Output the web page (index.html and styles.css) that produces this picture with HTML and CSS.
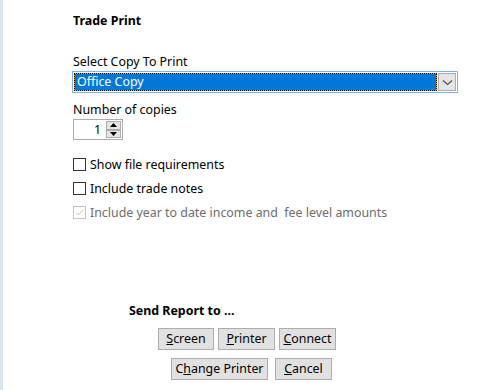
FILE: index.html
```html
<!DOCTYPE html>
<html>
<head>
<meta charset="utf-8">
<link rel="stylesheet" href="styles.css">
</head>
<body>
<div class="page">
  <div class="title">Trade Print</div>
  <div class="label label-select">Select Copy To Print</div>
  <div class="combo">
    <div class="combo-field"><div class="combo-focus">Office Copy</div></div>
    <div class="combo-btn">
      <svg width="11" height="7" viewBox="0 0 11 7"><path d="M1 1.5 L5.5 5.5 L10 1.5" fill="none" stroke="#555" stroke-width="1.2"/></svg>
    </div>
  </div>
  <div class="label label-num">Number of copies</div>
  <div class="spinner">
    <div class="spin-value">1</div>
    <div class="spin-btns">
      <div class="spin-btn"><svg width="7" height="4" viewBox="0 0 7 4"><path d="M0 4 L3.5 0 L7 4 Z" fill="#000"/></svg></div>
      <div class="spin-btn"><svg width="7" height="4" viewBox="0 0 7 4"><path d="M0 0 L3.5 4 L7 0 Z" fill="#000"/></svg></div>
    </div>
  </div>
  <div class="checks">
    <div class="check-row"><span class="box"></span><span>Show file requirements</span></div>
    <div class="check-row"><span class="box"></span><span>Include trade notes</span></div>
    <div class="check-row disabled"><span class="box"><svg width="11" height="11" viewBox="0 0 11 11"><path d="M2 5.5 L4.5 8 L9.5 2.5" fill="none" stroke="#c2c2c2" stroke-width="1"/></svg></span><span>Include year to date income and&nbsp; fee level amounts</span></div>
  </div>
  <div class="send">
    <div class="send-title">Send Report to ...</div>
    <div class="btn-row row1">
      <div class="btn w56"><u>S</u>creen</div>
      <div class="btn w57"><u>P</u>rinter</div>
      <div class="btn w57"><u>C</u>onnect</div>
    </div>
    <div class="btn-row row2">
      <div class="btn w97">C<u>h</u>ange Printer</div>
      <div class="btn w57"><u>C</u>ancel</div>
    </div>
  </div>
</div>
</body>
</html>
```
FILE: styles.css
```css
html, body {
  margin: 0;
  padding: 0;
  background: #fff;
}
body {
  font-family: "Noto Sans", "Open Sans", sans-serif;
  font-size: 12.4px;
  color: #000;
}
.page {
  border-left: 3px solid #d9e5f3;
  height: 390px;
  box-sizing: border-box;
  padding-left: 70px;
  padding-top: 13px;
}
.title {
  font-weight: bold;
  line-height: 16px;
  height: 16px;
}
.label {
  line-height: 16px;
  height: 16px;
}
.label-select {
  margin-top: 25px;
}
.combo {
  margin-top: 1px;
  margin-left: -1px;
  width: 386px;
  height: 22px;
  box-sizing: border-box;
  border: 1px solid #7eb4ea;
  padding: 1px;
  display: flex;
  gap: 1px;
}
.combo-field {
  flex: 1;
  background: #f0a030;
}
.combo-focus {
  height: 100%;
  box-sizing: border-box;
  border: 1px dotted #000;
  background: #0078d7;
  background-clip: padding-box;
  color: #fff;
  line-height: 16px;
  padding-left: 2px;
}
.combo-btn {
  width: 18px;
  box-sizing: border-box;
  border: 1px solid #adadad;
  background: #e5e5e5;
  display: flex;
  align-items: center;
  justify-content: center;
}
.label-num {
  margin-top: 9px;
}
.spinner {
  margin-top: 1px;
  width: 50px;
  height: 21px;
  box-sizing: border-box;
  border: 1px solid #acacac;
  display: flex;
  align-items: center;
}
.spin-value {
  flex: 1;
  text-align: right;
  padding-right: 5px;
  line-height: 16px;
}
.spin-btns {
  width: 15px;
  height: 17px;
  display: flex;
  flex-direction: column;
  margin-right: 1px;
}
.spin-btn {
  flex: 1;
  box-sizing: border-box;
  border: 1px solid #adadad;
  background: #e5e5e5;
  display: flex;
  align-items: center;
  justify-content: center;
}
.checks {
  margin-top: 12px;
}
.check-row {
  height: 24px;
  display: flex;
  align-items: center;
  gap: 4px;
}
.box {
  width: 13px;
  height: 13px;
  box-sizing: border-box;
  border: 1px solid #333;
  background: #fff;
  display: flex;
  align-items: center;
  justify-content: center;
}
.disabled {
  color: #6d6d6d;
}
.disabled .box {
  border-color: #c2c2c2;
}
.send {
  margin-top: 79px;
}
.send-title {
  font-weight: bold;
  padding-left: 56px;
  line-height: 16px;
  height: 16px;
}
.btn-row {
  display: flex;
}
.row1 {
  margin-top: 9px;
  padding-left: 85px;
  gap: 4px;
}
.row2 {
  margin-top: 8px;
  padding-left: 98px;
  gap: 7px;
}
.btn {
  height: 22px;
  box-sizing: border-box;
  border: 1px solid #adadad;
  background: #e1e1e1;
  display: flex;
  align-items: center;
  justify-content: center;
  line-height: 16px;
}
.w56 { width: 56px; }
.w57 { width: 57px; }
.w97 { width: 97px; }
```
